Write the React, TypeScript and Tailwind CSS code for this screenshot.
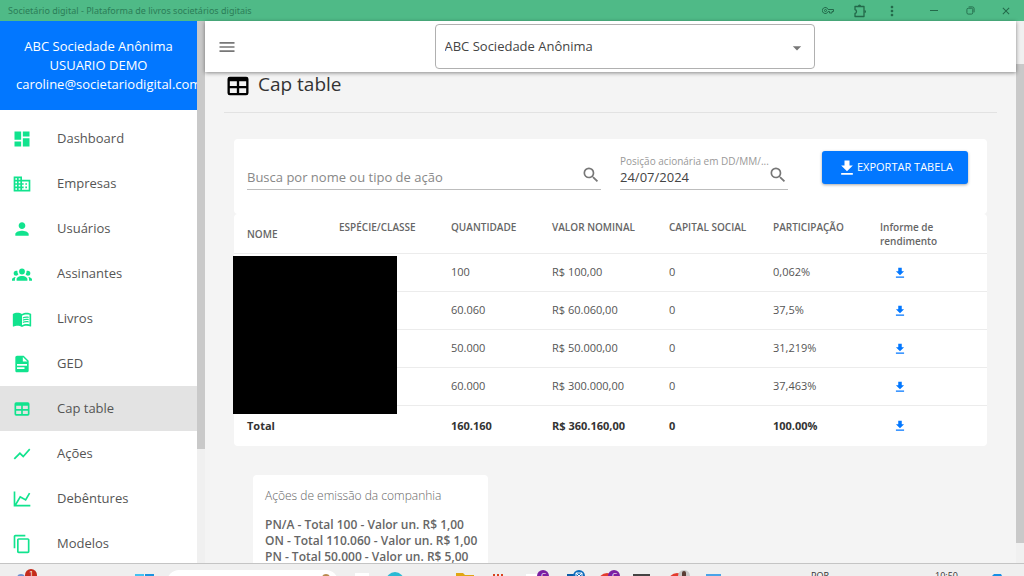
import React, { useState } from "react";
import {
  MdClose,
  MdContentCopy,
  MdDashboard,
  MdDomain,
  MdMenu,
  MdMenuBook,
  MdMoreVert,
  MdPerson,
  MdSearch,
  MdShowChart,
  MdArrowDropDown,
} from "react-icons/md";

interface IconProps {
  className?: string;
}

function PathIcon({ d, className }: IconProps & { d: string }) {
  return (
    <svg viewBox="0 0 24 24" fill="currentColor" className={className} aria-hidden="true">
      <path d={d} />
    </svg>
  );
}

const GroupIcon = ({ className }: IconProps) => (
  <PathIcon
    className={className}
    d="M12,5.5A3.5,3.5 0 0,1 15.5,9A3.5,3.5 0 0,1 12,12.5A3.5,3.5 0 0,1 8.5,9A3.5,3.5 0 0,1 12,5.5M5,8C5.56,8 6.08,8.15 6.53,8.42C6.38,9.85 6.8,11.27 7.66,12.38C7.16,13.34 6.16,14 5,14A3,3 0 0,1 2,11A3,3 0 0,1 5,8M19,8A3,3 0 0,1 22,11A3,3 0 0,1 19,14C17.84,14 16.84,13.34 16.34,12.38C17.2,11.27 17.62,9.85 17.47,8.42C17.92,8.15 18.44,8 19,8M5.5,18.25C5.5,16.18 8.41,14.5 12,14.5C15.59,14.5 18.5,16.18 18.5,18.25V20H5.5V18.25M0,20V18.5C0,17.11 1.89,15.94 4.45,15.6C3.86,16.28 3.5,17.22 3.5,18.25V20H0M24,20H20.5V18.25C20.5,17.22 20.14,16.28 19.55,15.6C22.11,15.94 24,17.11 24,18.5V20Z"
  />
);

const FileIcon = ({ className }: IconProps) => (
  <PathIcon
    className={className}
    d="M13,9H18.5L13,3.5V9M6,2H14L20,8V20A2,2 0 0,1 18,22H6C4.89,22 4,21.1 4,20V4C4,2.89 4.89,2 6,2M15,18V16H6V18H15M18,14V12H6V14H18Z"
  />
);

const TableIcon = ({ className }: IconProps) => (
  <PathIcon
    className={className}
    d="M5,4H19A2,2 0 0,1 21,6V18A2,2 0 0,1 19,20H5A2,2 0 0,1 3,18V6A2,2 0 0,1 5,4M5,8V12H11V8H5M13,8V12H19V8H13M5,14V18H11V14H5M13,14V18H19V14H13Z"
  />
);

const ChartLineIcon = ({ className }: IconProps) => (
  <PathIcon
    className={className}
    d="M16,11.78L20.24,4.45L21.97,5.45L16.74,14.5L10.23,10.75L5.46,19H22V21H2V3H4V17.54L9.5,8L16,11.78Z"
  />
);

const DownloadIcon = ({ className }: IconProps) => (
  <PathIcon className={className} d="M5,20H19V18H5M19,9H15V3H9V9H5L12,16L19,9Z" />
);

const menuItems = [
  { label: "Dashboard", Icon: MdDashboard },
  { label: "Empresas", Icon: MdDomain },
  { label: "Usuários", Icon: MdPerson },
  { label: "Assinantes", Icon: GroupIcon },
  { label: "Livros", Icon: MdMenuBook },
  { label: "GED", Icon: FileIcon },
  { label: "Cap table", Icon: TableIcon },
  { label: "Ações", Icon: MdShowChart },
  { label: "Debêntures", Icon: ChartLineIcon },
  { label: "Modelos", Icon: MdContentCopy },
];

const rows = [
  { quantity: "100", value: "R$ 100,00", capital: "0", share: "0,062%" },
  { quantity: "60.060", value: "R$ 60.060,00", capital: "0", share: "37,5%" },
  { quantity: "50.000", value: "R$ 50.000,00", capital: "0", share: "31,219%" },
  { quantity: "60.000", value: "R$ 300.000,00", capital: "0", share: "37,463%" },
];

function TitleBar() {
  return (
    <header className="flex h-[21px] shrink-0 items-center bg-[#4fba87] pl-2 text-[#2b7d57]">
      <span className="text-[9px] leading-3 font-[Noto_Sans,sans-serif]">
        Societário digital - Plataforma de livros societários digitais
      </span>
      <div className="ml-auto flex items-center text-[#23694a]">
        <button aria-label="Senhas" className="flex w-8 justify-center">
          <svg viewBox="0 0 24 14" className="h-[7px] w-3" fill="none" stroke="currentColor" strokeWidth="2">
            <path d="M12.3 5A6 6 0 1 0 12.3 9H15V12H20V9H23V5Z" />
            <circle cx="7" cy="7" r="2" />
          </svg>
        </button>
        <button aria-label="Extensões" className="flex w-8 justify-center">
          <svg viewBox="0 0 14 14" className="size-[14px]" fill="none" stroke="currentColor" strokeWidth="1.3">
            <path d="M2 2.5H11V12.5H2V9.5C4 9 4 6 2 5.5Z" strokeLinejoin="round" />
            <path d="M5 2A1.5 1.5 0 0 1 8 2ZM11.5 6A1.5 1.5 0 0 1 11.5 9Z" fill="currentColor" stroke="none" />
          </svg>
        </button>
        <button aria-label="Mais" className="flex w-8 justify-center">
          <MdMoreVert className="size-4" />
        </button>
        <button aria-label="Minimizar" className="ml-2 flex w-9 justify-center">
          <span className="h-px w-2 bg-current" />
        </button>
        <button aria-label="Restaurar" className="flex w-9 justify-center">
          <svg viewBox="0 0 10 10" className="size-[9px]" fill="none" stroke="currentColor">
            <rect x="1" y="2.5" width="6.5" height="6.5" rx="1.5" />
            <path d="M3 1H7A2 2 0 0 1 9 3V7" />
          </svg>
        </button>
        <button aria-label="Fechar" className="flex w-9 justify-center">
          <MdClose className="size-3" />
        </button>
      </div>
    </header>
  );
}

function Sidebar() {
  return (
    <aside className="flex w-[205px] shrink-0 overflow-hidden bg-white">
      <div className="min-w-0 flex-1 overflow-hidden">
        <div className="h-[89px] bg-[#0277ff] px-4 pt-4 text-center text-[13px] leading-[19px] text-white">
          <p>ABC Sociedade Anônima</p>
          <p>USUARIO DEMO</p>
          <p>caroline@societariodigital.com</p>
        </div>
        <nav className="pt-[6px]">
          {menuItems.map(({ label, Icon }) => (
            <a
              key={label}
              href="#"
              className={`flex h-[45px] items-center gap-[25px] pl-3 text-[13px] text-[#555] ${
                label === "Cap table" ? "bg-[#e3e3e3]" : ""
              }`}
            >
              <Icon className="size-5 shrink-0 text-[#11e38e]" />
              {label}
            </a>
          ))}
        </nav>
      </div>
      <div className="w-2 bg-[#f0f0f0]">
        <div className="h-[79%] bg-[#c9c9c9]" />
      </div>
    </aside>
  );
}

function Toolbar() {
  return (
    <div className="relative z-10 mr-2 flex h-[51px] shrink-0 items-center bg-white pr-1 pl-3 shadow-[0_1px_4px_rgba(0,0,0,0.45)]">
      <button aria-label="Menu" className="text-[#777]">
        <MdMenu className="size-5" />
      </button>
      <div className="relative mx-auto w-[380px]">
        <select
          aria-label="Empresa"
          className="h-[45px] w-full appearance-none rounded border border-[#b0b0b0] bg-white px-[9px] text-[13px] text-[#444]"
        >
          <option>ABC Sociedade Anônima</option>
        </select>
        <MdArrowDropDown className="pointer-events-none absolute top-[14px] right-2 size-5 text-[#777]" />
      </div>
    </div>
  );
}

function Filters() {
  const [query, setQuery] = useState("");
  const [date, setDate] = useState("24/07/2024");

  return (
    <div className="flex h-[75px] gap-[19px] rounded bg-white pt-3 pr-[19px] pl-[13px]">
      <div className="flex h-[39px] flex-1 items-end border-b border-[#bdbdbd] pb-1">
        <input
          aria-label="Busca por nome ou tipo de ação"
          placeholder="Busca por nome ou tipo de ação"
          value={query}
          onChange={(e) => setQuery(e.target.value)}
          className="h-4 min-w-0 flex-1 text-[13px] leading-4 text-[#444] outline-none placeholder:text-[#888]"
        />
        <MdSearch className="size-5 text-[#777]" />
      </div>
      <div className="flex h-[39px] w-[168px] items-end border-b border-[#bdbdbd] pb-1">
        <div className="min-w-0 flex-1">
          <label htmlFor="date" className="block text-[10px] leading-4 whitespace-nowrap text-[#999]">
            Posição acionária em DD/MM/...
          </label>
          <input
            id="date"
            value={date}
            onChange={(e) => setDate(e.target.value)}
            className="block h-4 w-full text-[13px] leading-4 text-[#444] outline-none"
          />
        </div>
        <MdSearch className="size-5 text-[#777]" />
      </div>
      <button className="ml-[15px] flex h-[33px] w-[146px] items-center justify-center rounded-[3px] bg-[#0277ff] text-[11px] text-white shadow-[0_1px_3px_rgba(0,0,0,0.35)]">
        <DownloadIcon className="size-5" />
        EXPORTAR TABELA
      </button>
    </div>
  );
}

function DownloadCell() {
  return (
    <td>
      <button aria-label="Baixar informe" className="ml-[13px] flex size-[14px] items-center justify-center text-[#0277ff]">
        <DownloadIcon className="size-[14px]" />
      </button>
    </td>
  );
}

function CapTable() {
  return (
    <div className="relative rounded bg-white">
      <table className="w-full table-fixed border-separate border-spacing-0 text-left text-[11px] text-[#555] [&_td]:border-[#ececec] [&_td]:pl-[13px] [&_th]:pl-[13px]">
        <thead className="text-[10px] leading-[14px] text-[#666]">
          <tr className="h-10 [&>th]:border-b [&>th]:border-[#ececec] [&>th]:pt-[6px] [&>th]:align-top [&>th]:font-semibold">
            <th className="w-[92px]">
              <span className="block pt-[7px]">NOME</span>
            </th>
            <th className="w-[112px]">ESPÉCIE/CLASSE</th>
            <th className="w-[101px]">QUANTIDADE</th>
            <th className="w-[117px]">VALOR NOMINAL</th>
            <th className="w-[104px]">CAPITAL SOCIAL</th>
            <th className="w-[107px]">PARTICIPAÇÃO</th>
            <th>
              Informe de
              <br />
              rendimento
            </th>
          </tr>
        </thead>
        <tbody>
          {rows.map((row) => (
            <tr key={row.share} className="h-[38px] [&>td]:border-b">
              <td />
              <td />
              <td>{row.quantity}</td>
              <td>{row.value}</td>
              <td>{row.capital}</td>
              <td>{row.share}</td>
              <DownloadCell />
            </tr>
          ))}
          <tr className="h-10 font-bold text-[#333]">
            <td>Total</td>
            <td />
            <td>160.160</td>
            <td>R$ 360.160,00</td>
            <td>0</td>
            <td>100.00%</td>
            <DownloadCell />
          </tr>
        </tbody>
      </table>
      <div className="absolute top-[42px] -left-px h-[158px] w-[164px] bg-black" />
    </div>
  );
}

function SharesCard() {
  return (
    <section className="ml-[19px] w-[235px] rounded bg-white px-3 pt-3 pb-4 text-[12px] text-[#666]">
      <h2 className="mb-3 leading-[18px] font-light">Ações de emissão da companhia</h2>
      <div className="leading-4 font-semibold whitespace-nowrap">
        <p>PN/A - Total 100 - Valor un. R$ 1,00</p>
        <p>ON - Total 110.060 - Valor un. R$ 1,00</p>
        <p>PN - Total 50.000 - Valor un. R$ 5,00</p>
      </div>
    </section>
  );
}

function Taskbar() {
  return (
    <footer className="flex h-[13px] shrink-0 items-start overflow-hidden border-t border-[#c4c4c4] bg-[#efefef] text-[9px] leading-[12px] text-[#333]">
      <svg width="40" height="12" className="ml-4 shrink-0">
        <circle cx="5" cy="14" r="3" fill="none" stroke="#6b8fd0" strokeWidth="2" />
        <circle cx="15" cy="11" r="6" fill="#c42b1c" />
        <text x="13" y="12" fontSize="8" fill="#fff">
          1
        </text>
      </svg>
      <svg width="19" height="12" className="ml-[79px] shrink-0">
        <path d="M0 10H9V12H0Z" fill="#43c1f2" />
        <path d="M10 10H19V12H10Z" fill="#1a94e0" />
      </svg>
      <div className="mt-[6px] ml-[13px] h-6 w-[171px] shrink-0 rounded-full bg-white pl-[155px]">
        <svg width="8" height="6">
          <circle cx="4" cy="8" r="4" fill="#b98a4e" />
        </svg>
      </div>
      <svg width="390" height="12" className="ml-3 shrink-0">
        <rect x="5" y="9" width="14" height="6" fill="#fff" />
        <circle cx="45" cy="17" r="9" fill="#2bbad4" />
        <path d="M106 9H113L115 11H124V14H106Z" fill="#e0a613" />
        <path d="M143 10H145V13H143ZM147 10H149V13H147ZM151 10H153V13H151Z" fill="#d8431f" />
        <path d="M176 10H188V13H176Z" fill="#fff" />
        <circle cx="193" cy="12" r="6" fill="#7b1fa2" />
        <rect x="217" y="10" width="10" height="4" fill="#0b5ea8" />
        <circle cx="229" cy="12" r="6" fill="#0f6cbd" />
        <path d="M226 9H232V13H226ZM226 9L229 12L232 9" fill="none" stroke="#fff" />
        <circle cx="257" cy="18" r="9" fill="#e33b2e" />
        <circle cx="264" cy="12" r="6" fill="#7b1fa2" />
        <rect x="283" y="10" width="17" height="4" fill="#444" />
        <circle cx="327" cy="18" r="9" fill="#e33b2e" />
        <circle cx="334" cy="12" r="6" fill="#c9c9c9" />
        <rect x="332" y="7" width="4" height="7" rx="2" fill="#5a3d35" />
        <rect x="356" y="10" width="15" height="4" fill="#4aa3e8" />
        <text x="191" y="14" fontSize="8" fill="#fff">
          C
        </text>
        <text x="262" y="14" fontSize="8" fill="#fff">
          C
        </text>
      </svg>
      <span className="mt-[6px] ml-auto">POR</span>
      <span className="mt-[6px] ml-[106px]">10:50</span>
      <svg width="12" height="12" className="mr-[21px] ml-[33px] shrink-0">
        <path d="M1 12L3 10H10L11 12Z" fill="#178fe6" />
      </svg>
    </footer>
  );
}

export default function App() {
  return (
    <div className="flex h-screen flex-col overflow-hidden font-[Open_Sans,sans-serif]">
      <TitleBar />
      <div className="flex min-h-0 flex-1">
        <Sidebar />
        <main className="relative flex min-w-0 flex-1 flex-col bg-[#f4f4f4]">
          <Toolbar />
          <div className="min-h-0 flex-1 overflow-hidden pr-[27px] pl-[19px]">
            <div className="flex h-[41px] items-start gap-[6px] border-b border-[#e2e2e2] text-[#333]">
              <TableIcon className="size-7 text-black" />
              <h1 className="text-[19px] leading-6">Cap table</h1>
            </div>
            <div className="px-[10px] pt-[26px]">
              <Filters />
              <CapTable />
              <div className="h-[29px]" />
              <SharesCard />
            </div>
          </div>
          <div className="absolute inset-y-0 right-0 w-2 bg-[#f0f0f0] pt-[43px]">
            <div className="h-[96%] bg-[#c9c9c9]" />
          </div>
        </main>
      </div>
      <Taskbar />
    </div>
  );
}
